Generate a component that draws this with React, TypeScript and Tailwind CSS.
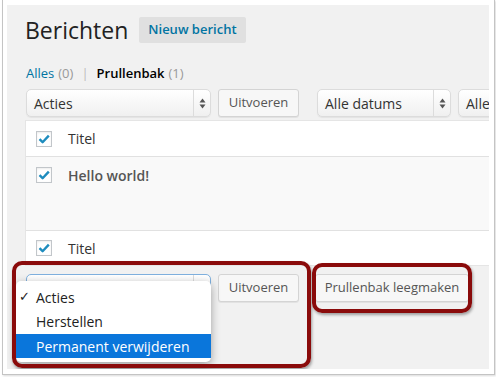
import React from 'react';

const font = { fontFamily: '"Open Sans", "Noto Sans", sans-serif' };

const Arrows = () => (
  <svg width="7" height="11" viewBox="0 0 7 11">
    <path d="M3.5 0.5 L6.5 4.5 H0.5 Z" fill="#555" />
    <path d="M0.5 6.5 H6.5 L3.5 10.5 Z" fill="#555" />
  </svg>
);

const Select = ({ label, width, focus }: { label: string; width: string; focus?: boolean }) => (
  <div
    className={`flex h-[28px] shrink-0 items-stretch rounded-[5px] border bg-gradient-to-b from-white to-[#f0f0f0] shadow-[0_1px_1px_rgba(0,0,0,0.06)] ${width} ${
      focus ? 'border-[#7fb0de]' : 'border-[#dcdcdc]'
    }`}
  >
    <div className="flex flex-1 items-center overflow-hidden whitespace-nowrap pl-[7px] text-[14px] text-[#333]">{label}</div>
    <div className="flex w-[17px] items-center justify-center border-l border-[#dcdcdc]">
      <Arrows />
    </div>
  </div>
);

const Button = ({ children, width }: { children: React.ReactNode; width: string }) => (
  <div
    className={`flex h-[28px] shrink-0 items-center justify-center rounded-[3px] border border-[#d4d4d4] bg-[#f7f7f7] text-[13px] text-[#555] shadow-[0_1px_0_rgba(0,0,0,0.06)] ${width}`}
  >
    {children}
  </div>
);

const Check = () => (
  <div className="flex h-[16px] w-[16px] shrink-0 items-center justify-center border border-[#c2c6ca] bg-white shadow-[inset_0_1px_2px_rgba(0,0,0,0.08)]">
    <svg width="12" height="10" viewBox="0 0 12 10">
      <path d="M1.5 5.2 L4.6 8.2 L10.8 1.6" fill="none" stroke="#1e8cbe" strokeWidth="2.4" strokeLinejoin="round" />
    </svg>
  </div>
);

export default function App() {
  return (
    <div className="h-[377px] w-[496px] overflow-hidden bg-white pl-[2px]" style={font}>
      <div className="h-[375px] w-[493px] border-x border-b border-[#c4c4c4] pb-[5px] pl-[4px] pr-[5px] pt-[5px] shadow-[1px_1px_2px_rgba(0,0,0,0.15)]">
        <div className="relative h-[364px] w-[482px] overflow-hidden bg-[#f1f1f1]">
          {/* heading */}
          <div className="ml-[18px] flex items-center gap-[11px] pt-[12px]">
            <h1 className="text-[23px] leading-[26px] text-[#222]">Berichten</h1>
            <div className="flex h-[26px] items-center rounded-[2px] bg-[#e0e0e0] px-[9px] text-[13px] font-semibold text-[#0074a2]">
              Nieuw bericht
            </div>
          </div>

          {/* filters */}
          <div className="ml-[19px] mt-[22px] flex h-[18px] items-center text-[13px]">
            <span className="text-[#0074a2]">Alles</span>
            <span className="ml-[4px] text-[#999]">(0)</span>
            <span className="mx-[8px] text-[#bbb]">|</span>
            <span className="font-semibold text-black">Prullenbak</span>
            <span className="ml-[4px] text-[#999]">(1)</span>
          </div>

          {/* top toolbar */}
          <div className="ml-[19px] mt-[6px] flex items-center">
            <Select label="Acties" width="w-[185px]" />
            <div className="ml-[7px]">
              <Button width="w-[81px]">Uitvoeren</Button>
            </div>
            <div className="ml-[18px]">
              <Select label="Alle datums" width="w-[134px]" />
            </div>
            <div className="ml-[7px]">
              <Select label="Alle categorieën" width="w-[150px]" />
            </div>
          </div>

          {/* table */}
          <div className="ml-[18px] mt-[3px] w-[500px] border border-[#e5e5e5] bg-white text-[14px] text-[#333]">
            <div className="flex h-[35px] items-center pl-[10px]">
              <Check />
              <span className="ml-[16px]">Titel</span>
            </div>
            <div className="h-[74px] border-t border-[#e1e1e1] bg-[#f9f9f9] pl-[10px] pt-[8px]">
              <div className="flex h-[20px] items-center">
                <Check />
                <span className="ml-[16px] font-semibold text-[#555]">Hello world!</span>
              </div>
            </div>
            <div className="flex h-[35px] items-center border-t border-[#e1e1e1] pl-[10px]">
              <Check />
              <span className="ml-[16px]">Titel</span>
            </div>
          </div>

          {/* bottom toolbar (select is covered by its open popup) */}
          <div className="ml-[19px] mt-[8px] flex items-center">
            <Select label="" width="w-[185px]" focus />
            <div className="ml-[7px]">
              <Button width="w-[81px]">Uitvoeren</Button>
            </div>
            <div className="ml-[16px]">
              <Button width="w-[154px]">Prullenbak leegmaken</Button>
            </div>
          </div>

          {/* open dropdown */}
          <div className="absolute left-[9px] top-[276px] w-[195px] rounded-[5px] bg-white py-[4px] text-[14px] text-[#222] shadow-[0_3px_10px_rgba(0,0,0,0.35)]">
            <div className="flex h-[24px] items-center pl-[3px]">
              <span className="w-[17px] text-[13px]">✓</span>
              <span>Acties</span>
            </div>
            <div className="flex h-[25px] items-center pl-[20px]">Herstellen</div>
            <div className="flex h-[24px] items-center bg-[#0a76db] pl-[20px] text-white">Permanent verwijderen</div>
          </div>

          {/* annotations */}
          <div className="absolute left-[5px] top-[256px] h-[107px] w-[299px] rounded-[10px] border-[4px] border-[#8a0b0b] shadow-[1px_2px_3px_rgba(0,0,0,0.35)]" />
          <div className="absolute left-[305px] top-[258px] h-[50px] w-[160px] rounded-[10px] border-[4px] border-[#8a0b0b] shadow-[1px_2px_3px_rgba(0,0,0,0.35)]" />
        </div>
      </div>
    </div>
  );
}
